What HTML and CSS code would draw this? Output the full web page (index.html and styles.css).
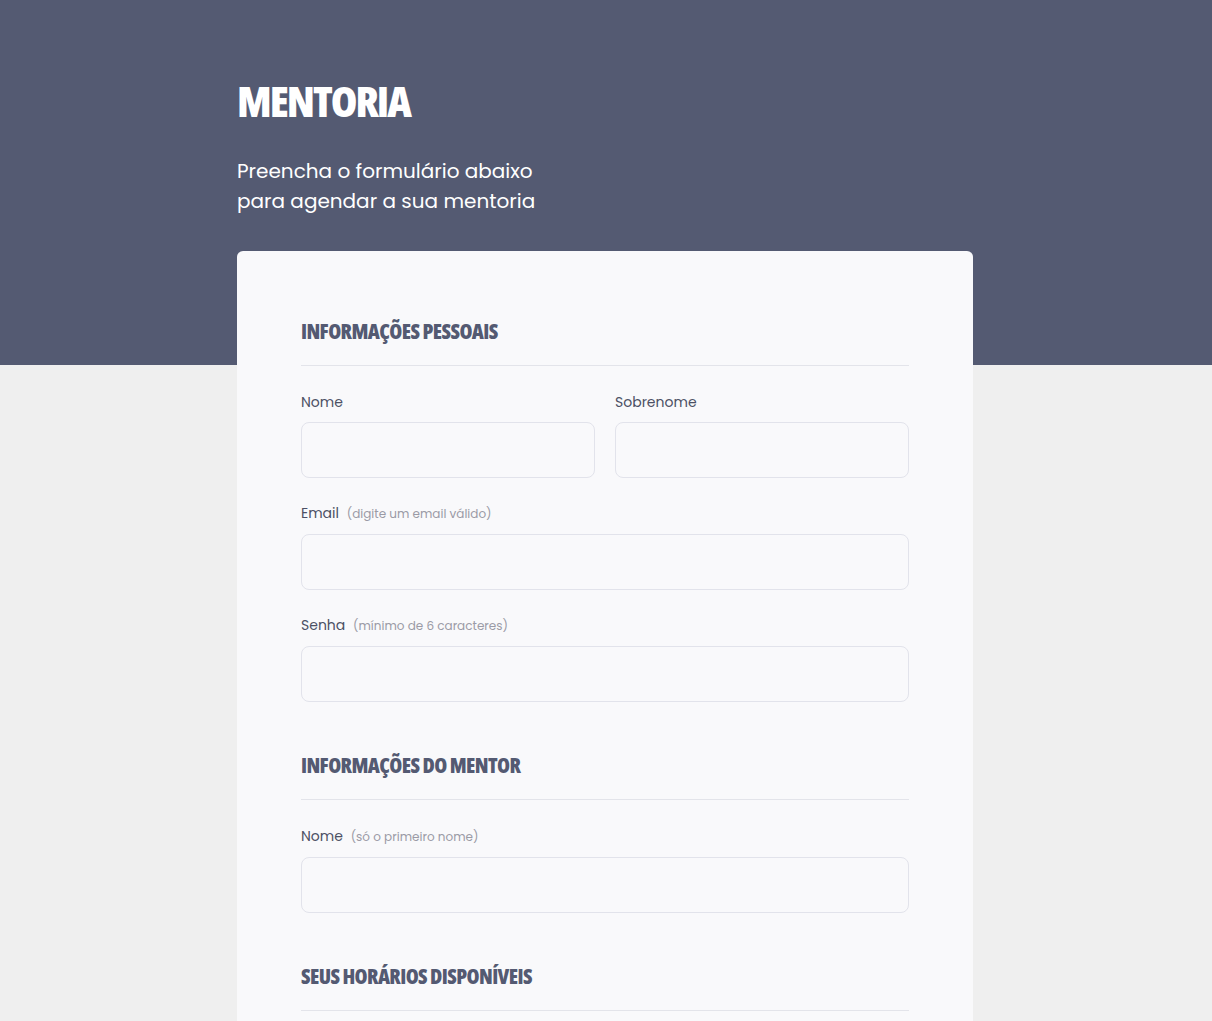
FILE: index.html
```html
<!DOCTYPE html>
<html lang="pt-BR">
<head>
<meta charset="utf-8">
<title>Mentoria</title>
<link rel="stylesheet" href="styles.css">
</head>
<body>
<main class="page">
  <header class="intro">
    <h1 class="title">MENTORIA</h1>
    <p class="subtitle">Preencha o formulário abaixo<br>para agendar a sua mentoria</p>
  </header>
  <form class="card">
    <section class="section">
      <h2 class="section-title">INFORMAÇÕES PESSOAIS</h2>
      <div class="row">
        <div class="field">
          <label class="label">Nome</label>
          <input class="input" type="text">
        </div>
        <div class="field">
          <label class="label">Sobrenome</label>
          <input class="input" type="text">
        </div>
      </div>
      <div class="field">
        <label class="label">Email <span class="hint">(digite um email válido)</span></label>
        <input class="input" type="email">
      </div>
      <div class="field">
        <label class="label">Senha <span class="hint">(mínimo de 6 caracteres)</span></label>
        <input class="input" type="password">
      </div>
    </section>
    <section class="section">
      <h2 class="section-title">INFORMAÇÕES DO MENTOR</h2>
      <div class="field">
        <label class="label">Nome <span class="hint">(só o primeiro nome)</span></label>
        <input class="input" type="text">
      </div>
    </section>
    <section class="section">
      <h2 class="section-title">SEUS HORÁRIOS DISPONÍVEIS</h2>
    </section>
  </form>
</main>
</body>
</html>
```

FILE: styles.css
```css
* { box-sizing: border-box; }

html, body { margin: 0; padding: 0; }

body {
  background: linear-gradient(to bottom, #545a72 0, #545a72 365px, #efefef 365px, #efefef 100%);
  font-family: "Poppins", "Open Sans", "Noto Sans", sans-serif;
  color: #4c5064;
  min-height: 100vh;
}

.page {
  width: 736px;
  margin: 0 auto;
  padding-top: 76px;
  padding-bottom: 60px;
  position: relative;
  left: -1px;
}

.title {
  margin: 0;
  font-family: "Open Sans", "Liberation Sans Narrow", sans-serif;
  font-stretch: 75%;
  font-weight: 800;
  font-size: 43px;
  line-height: 50px;
  letter-spacing: -2px;
  color: #ffffff;
}

.subtitle {
  margin: 30px 0 0;
  font-size: 20px;
  line-height: 30px;
  color: #ffffff;
  font-weight: 400;
}

.card {
  margin-top: 35px;
  background: #f9f9fb;
  border-radius: 6px;
  padding: 66px 64px 120px;
  display: flex;
  flex-direction: column;
  gap: 49px;
}

.section {
  display: flex;
  flex-direction: column;
  gap: 25px;
}

.section-title {
  margin: 0 0 1px;
  padding-bottom: 20px;
  border-bottom: 1px solid #e3e4ea;
  font-family: "Open Sans", "Liberation Sans Narrow", sans-serif;
  font-stretch: 75%;
  font-weight: 800;
  font-size: 21px;
  line-height: 28px;
  letter-spacing: -0.6px;
  color: #545a72;
}

.row {
  display: grid;
  grid-template-columns: 1fr 1fr;
  gap: 20px;
}

.field {
  display: flex;
  flex-direction: column;
  gap: 10px;
}

.label {
  font-size: 14px;
  line-height: 20px;
  color: #4c5064;
}

.hint {
  margin-left: 4px;
  font-size: 12px;
  color: #9b9ba6;
}

.input {
  height: 56px;
  width: 100%;
  border: 1px solid #e2e3eb;
  border-radius: 8px;
  background: #f9f9fb;
  font: inherit;
  padding: 0 16px;
  outline: none;
}
```
